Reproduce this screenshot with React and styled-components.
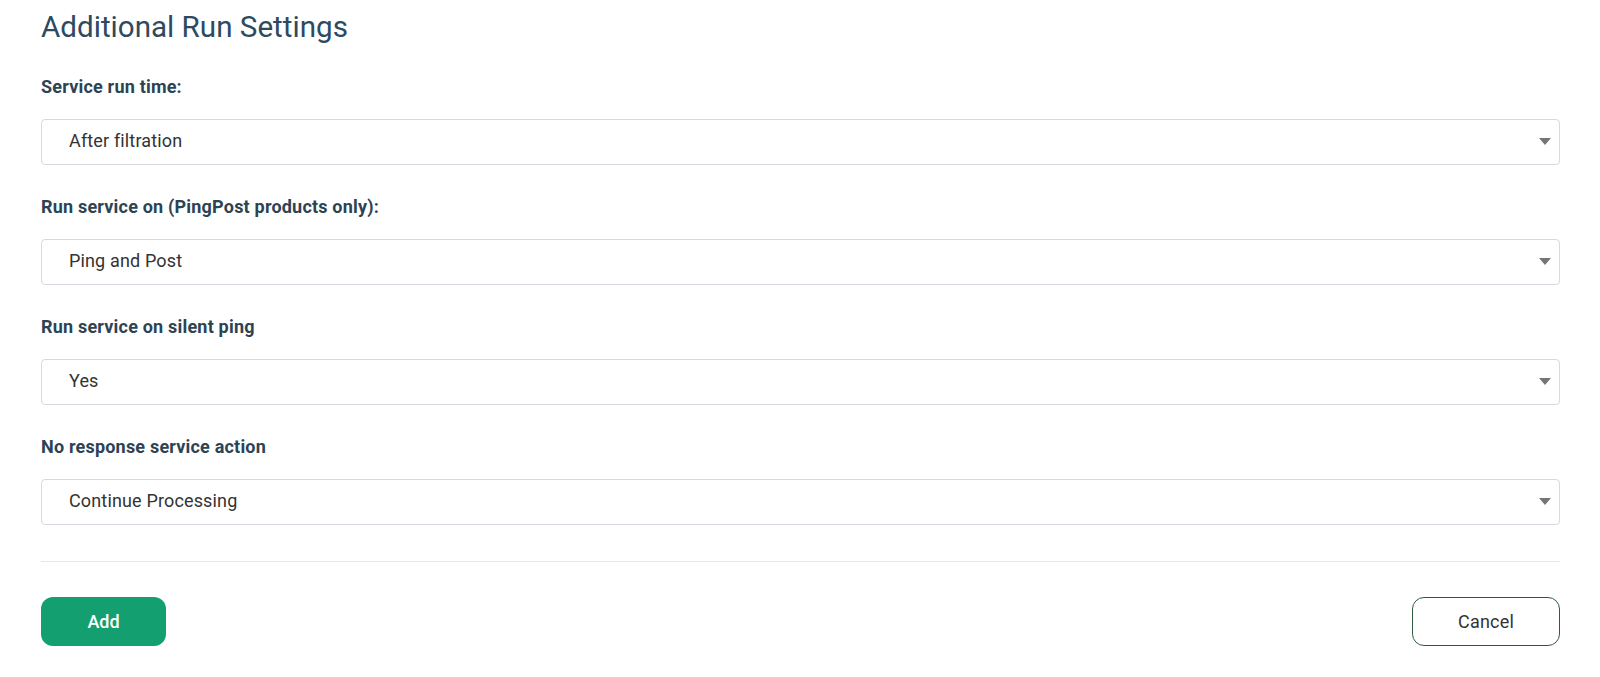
import * as React from 'react';
import styled, { createGlobalStyle } from 'styled-components';

const fields = [
  { label: 'Service run time:', value: 'After filtration' },
  { label: 'Run service on (PingPost products only):', value: 'Ping and Post' },
  { label: 'Run service on silent ping', value: 'Yes' },
  { label: 'No response service action', value: 'Continue Processing' },
];

const Caret = () => (
  <svg width="12" height="7" viewBox="0 0 12 7" aria-hidden="true">
    <path d="M0 0h12L6 7z" fill="#757575" />
  </svg>
);

const App = () => (
  <>
    <GlobalStyle />
    <Page>
      <Title>Additional Run Settings</Title>
      <Form>
        {fields.map((f) => (
          <Field key={f.label}>
            <Label>{f.label}</Label>
            <Select role="combobox" tabIndex={0}>
              <SelectValue>{f.value}</SelectValue>
              <Caret />
            </Select>
          </Field>
        ))}
      </Form>
      <Divider />
      <Actions>
        <PrimaryButton type="button">Add</PrimaryButton>
        <OutlineButton type="button">Cancel</OutlineButton>
      </Actions>
    </Page>
  </>
);

const GlobalStyle = createGlobalStyle`
  body {
    margin: 0;
    background: #ffffff;
    font-family: Roboto, "Liberation Sans", Arial, sans-serif;
  }
`;

const Page = styled.div`
  padding: 10px 40px 0 41px;
`;

const Title = styled.h1`
  margin: 0;
  font-size: 29.6px;
  line-height: 34px;
  font-weight: 400;
  color: #2d4a5f;
`;

const Form = styled.div`
  display: flex;
  flex-direction: column;
  gap: 31px;
  margin-top: 32px;
`;

const Field = styled.div`
  display: flex;
  flex-direction: column;
  gap: 21px;
`;

const Label = styled.label`
  font-size: 18px;
  line-height: 22px;
  font-weight: 700;
  letter-spacing: 0.2px;
  color: #2c4354;
`;

const Select = styled.div`
  display: flex;
  align-items: center;
  justify-content: space-between;
  height: 46px;
  box-sizing: border-box;
  padding: 0 8px 2px 27px;
  border: 1px solid #d6d9df;
  border-radius: 4px;
  background: #fff;
  cursor: pointer;
`;

const SelectValue = styled.span`
  font-size: 18px;
  line-height: 22px;
  letter-spacing: 0.15px;
  color: #333333;
`;

const Divider = styled.hr`
  margin: 36px 0 0;
  border: 0;
  border-top: 1px solid #e6e6ec;
`;

const Actions = styled.div`
  display: flex;
  justify-content: space-between;
  margin-top: 35px;
`;

const BaseButton = styled.button`
  height: 49px;
  border-radius: 12px;
  font-family: Roboto, "Liberation Sans", Arial, sans-serif;
  font-size: 18px;
  cursor: pointer;
`;

const PrimaryButton = styled(BaseButton)`
  width: 125px;
  border: 0;
  background: #139f70;
  color: #fff;
  font-weight: 500;
`;

const OutlineButton = styled(BaseButton)`
  width: 148px;
  border: 1px solid #2f5b40;
  background: #fff;
  color: #333;
  font-weight: 400;
  letter-spacing: 0.2px;
`;

export default App;
